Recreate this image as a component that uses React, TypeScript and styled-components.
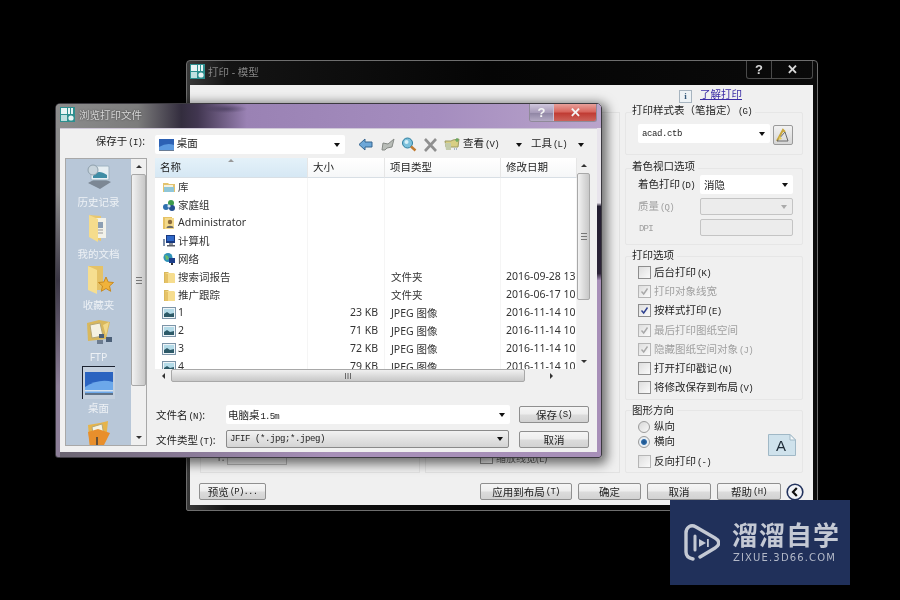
import React from "react";
import styled, { createGlobalStyle } from "styled-components";

const Global = createGlobalStyle`
  html, body { margin: 0; padding: 0; background: #000; }
  body { font-family: "Noto Sans", "Noto Sans CJK SC", sans-serif; font-size: 10.5px; color: #222; }
`;

const Desktop = styled.div`
  position: relative; width: 900px; height: 600px; overflow: hidden; background: #000; filter: blur(0.4px);
`;

/* ---------- back window ---------- */
const BackWindow = styled.div`
  position: absolute; left: 186px; top: 60px; width: 632px; height: 451px; box-sizing: border-box;
  border: 1px solid #6e6e6e; border-radius: 4px 4px 2px 2px;
  background: linear-gradient(90deg, #3a3a3a 0, #141414 40px, #050505 300px, #0a0a0a 100%);
  display: flex; flex-direction: column; padding: 0 4px 5px 3px;
`;
const TitleBar = styled.div`
  height: 24px; display: flex; align-items: flex-start; padding-top: 3px; box-sizing: border-box; flex: none;
`;
const BackTitleText = styled.span`color: #858585; font-size: 10.5px; margin-left: 3px;`;
const BackCaption = styled.div`
  margin-left: auto; margin-top: -3px; display: flex; height: 17px;
  border: 1px solid #4a4a4a; border-top: none; border-radius: 0 0 3px 3px; box-sizing: content-box;
`;
const CaptionBtn = styled.div<{ $w: number; $red?: boolean; $front?: boolean }>`
  width: ${p => p.$w}px; display: flex; align-items: center; justify-content: center;
  font: bold 13px "Liberation Sans", sans-serif;
  color: ${p => (p.$front ? "#f4f4f4" : "#d8d8d8")};
  border-left: 1px solid ${p => (p.$front ? "#c8c0d4" : "#4a4a4a")};
  background: ${p => p.$red ? "linear-gradient(180deg,#e8a09a 0,#d8665e 45%,#c03c34 55%,#cc625a 100%)" : p.$front ? "linear-gradient(180deg,#cfc6dc,#a79bb9 50%,#9187a5 55%,#b3a9c4)" : "transparent"};
  &:first-child { border-left: none; }
`;
const BackClient = styled.div`
  flex: 1; min-height: 0; background: #f0f0f0; display: flex; flex-direction: column;
`;
const BackMain = styled.div`flex: 1; display: flex; min-height: 0;`;
const LeftPane = styled.div`
  width: 435px; flex: none; box-sizing: border-box; padding: 27px 5px 0 10px; display: flex; gap: 5px;
`;
const LeftColumn = styled.div<{ $w: number }>`
  width: ${p => p.$w}px; flex: none; height: 361px; box-sizing: border-box; border: 1px solid #e2e2e2;
  display: flex; flex-direction: column; justify-content: flex-end; align-items: flex-start; padding: 0 0 7px 0;
`;
const GhostRow = styled.div<{ $left: number }>`
  display: flex; align-items: center; gap: 3px; margin-left: ${p => p.$left}px; color: #666; font-size: 10px; height: 16px;
`;
const GhostField = styled.div`width: 60px; height: 15px; box-sizing: border-box; border: 1px solid #bbb; background: #eee;`;
const RightPane = styled.div`width: 178px; flex: none; display: flex; flex-direction: column;`;
const LinkRow = styled.div`
  height: 27px; flex: none; box-sizing: border-box; padding: 2px 0 0 54px; display: flex; gap: 8px; align-items: flex-start;
`;
const InfoIcon = styled.div`
  width: 11px; height: 11px; margin-top: 3px; border: 1px solid #a7b4bf; background: #eef3f6; color: #355a7a;
  font: bold 9px "Liberation Serif", serif; text-align: center; line-height: 11px;
`;
const HelpLink = styled.a`color: #3b2ca6; text-decoration: underline; font-size: 10.5px; line-height: 14px;`;
const Group = styled.div<{ $h: number; $mt: number }>`
  height: ${p => p.$h}px; margin-top: ${p => p.$mt}px; flex: none; box-sizing: border-box;
  border: 1px solid #e6e6e6; border-radius: 2px; padding-left: 12px;
`;
const GroupTitle = styled.div<{ $up: number }>`
  height: 14px; line-height: 14px; margin: ${p => -8 - p.$up}px 0 ${p => p.$up}px -6px; width: fit-content; padding-right: 3px;
  background: #f0f0f0; color: #222; font-size: 10.5px; white-space: nowrap;
`;
const Key = styled.span`font-family: "Liberation Mono", monospace; font-size: 9px; letter-spacing: -0.8px; margin-left: 1px;`;
const StyleRow = styled.div`display: flex; margin-top: 7px; gap: 3px; align-items: flex-start;`;
const ComboBox = styled.div<{ $w: number; $h: number; $off?: boolean }>`
  width: ${p => p.$w}px; height: ${p => p.$h}px; box-sizing: border-box; flex: none;
  background: ${p => (p.$off ? "#ececec" : "#fff")};
  border: ${p => (p.$off ? "1px solid #c4c4c4" : "none")}; border-radius: 2px;
  display: flex; align-items: center; padding: 0 5px 0 4px;
`;
const ComboText = styled.span<{ $mono?: boolean }>`
  flex: 1; white-space: nowrap; overflow: hidden; font-size: 10.5px; color: #222;
  ${p => p.$mono && `font-family: "Liberation Mono", monospace; font-size: 9px; letter-spacing: -0.4px;`}
`;
const Arrow = styled.i<{ $off?: boolean }>`
  width: 0; height: 0; flex: none; border: 3.5px solid transparent; border-top: 4px solid ${p => (p.$off ? "#aaa" : "#111")}; border-bottom: none;
`;
const IconButton = styled.div`
  width: 20px; height: 20px; box-sizing: border-box; flex: none; margin-top: 1px; border: 1px solid #9a9a9a; border-radius: 2px;
  background: linear-gradient(180deg,#f2f2f2,#d6d6d6); display: flex; align-items: center; justify-content: center;
`;
const ShadeGrid = styled.div`
  display: grid; grid-template-columns: 62px 93px; grid-template-rows: 19px 17px 17px; row-gap: 4px; margin-top: 1px; align-items: center;
`;
const FieldLabel = styled.span<{ $off?: boolean }>`
  color: ${p => (p.$off ? "#a0a0a0" : "#222")}; font-size: 10.5px; white-space: nowrap; margin-bottom: 2px;
`;
const CheckList = styled.div`display: flex; flex-direction: column;`;
const CheckRow = styled.div<{ $h?: number }>`
  height: ${p => p.$h ?? 19.2}px; display: flex; align-items: center; gap: 3px; white-space: nowrap;
`;
const CheckBox = styled.div<{ $off?: boolean }>`
  width: 11px; height: 11px; flex: none; border: 1px solid ${p => (p.$off ? "#b5b5b5" : "#8d8d8d")};
  background: linear-gradient(135deg,#dedede,#fafafa); display: flex; align-items: center; justify-content: center;
`;
const RadioDot = styled.div<{ $on?: boolean }>`
  width: 10px; height: 10px; flex: none; margin-right: 1px; border-radius: 50%; border: 1px solid #9a9a9a;
  background: ${p => (p.$on ? "radial-gradient(circle,#1d4f86 0,#2c6aa8 35%,#e8eef4 48%)" : "linear-gradient(135deg,#d8d8d8,#f8f8f8)")};
`;
const OrientBody = styled.div`display: flex; margin-top: 2px;`;
const OrientLeft = styled.div`flex: 1;`;
const OrientIcon = styled.div`margin: 15px 6px 0 0;`;
const BackFooter = styled.div`
  flex: none; height: 17px; margin-top: 11px; padding: 0 10px 5px 9px; display: flex; align-items: center; gap: 6px;
`;
const PushBtn = styled.div<{ $w: number; $ml?: number }>`
  width: ${p => p.$w}px; height: 17px; flex: none; box-sizing: border-box; border: 1px solid #8f8f8f; border-radius: 2px;
  ${p => p.$ml && `margin-left: ${p.$ml}px;`}
  background: linear-gradient(180deg,#f5f5f5 0,#ededed 48%,#dcdcdc 52%,#d2d2d2 100%);
  display: flex; align-items: center; justify-content: center; font-size: 10.5px; color: #222; white-space: nowrap;
`;
const RoundBtn = styled.div`margin-left: -1px; width: 18px; height: 18px; flex: none;`;

/* ---------- front window ---------- */
const FrontWindow = styled.div`
  position: absolute; left: 55px; top: 103px; width: 547px; height: 355px; box-sizing: border-box;
  border: 1px solid #3c3a40; border-radius: 5px 5px 3px 3px; padding: 0 4px 5px 4px;
  background:
    linear-gradient(180deg,#e8e4ec 0,#e8e4ec 28%,#221d30 29%,#2c2438 48%,#a78fb8 50%,#a78fb8 100%) right top / 4px 100% no-repeat,
    linear-gradient(180deg,#8a8a8a 0,#8a8a8a 25%,#3a3644 50%,#8d7f98 80%,#8d7f98 100%) left top / 4px 100% no-repeat,
    linear-gradient(90deg,#6a6470 0,#8a7a98 25%,#a78fb8 50%,#a78fb8 100%);
  box-shadow: 2px 3px 11px 3px rgba(0,0,0,.55);
  display: flex; flex-direction: column;
`;
const FrontTitle = styled.div`
  height: 24px; flex: none; box-sizing: border-box; display: flex; align-items: flex-start; padding: 3px 4px 0;
  background:
    radial-gradient(ellipse 22px 4px at 170px 5px, rgba(50,42,70,.5), rgba(50,42,70,0)),
    linear-gradient(90deg,#8c8c8c 0,#7c7c7c 15%,#332d3e 23%,#413650 26%,#9a82b4 35%,#a58dbf 70%,#b9a4cb 100%);
  margin: 0 -4px; border-radius: 4px 4px 0 0;
`;
const FrontTitleText = styled.span`color: #d8d8d8; font-size: 10.5px; margin-left: 4px; text-shadow: 0 0 2px #333;`;
const FrontCaption = styled.div`
  margin-left: auto; margin-top: -3px; display: flex; height: 17px;
  border: 1px solid #8f8a99; border-top: none; border-radius: 0 0 3px 3px; overflow: hidden;
`;
const FrontClient = styled.div`
  flex: 1; min-height: 0; background: #f0f0f0; display: flex; flex-direction: column; padding-top: 6px; box-sizing: border-box;
  border-top: 1px solid #cfc8d8;
`;
const TopRow = styled.div`display: flex; align-items: center; height: 19px; flex: none;`;
const SaveLabel = styled.span`width: 85px; text-align: right; font-size: 10.5px; flex: none; margin-bottom: 8px;`;
const TopCombo = styled(ComboBox)`
  margin-left: 10px;
  ${ComboText} { margin-bottom: 4px; }
`;
const Toolbar = styled.div`display: flex; align-items: center; margin-left: 9px; height: 19px;`;
const ToolIcon = styled.div<{ $w: number }>`width: ${p => p.$w}px; flex: none; display: flex; justify-content: center;`;
const ToolText = styled.span<{ $w: number; $pad?: number }>`
  width: ${p => p.$w}px; flex: none; white-space: nowrap; font-size: 10.5px; margin-bottom: 5px; box-sizing: border-box;
  padding-left: ${p => p.$pad ?? 0}px;
`;
const Body = styled.div`display: flex; margin-top: 4px; padding-left: 5px; gap: 8px;`;
const Sidebar = styled.div`
  width: 82px; height: 288px; flex: none; box-sizing: border-box; border: 1px solid #a8a8a8; display: flex; background: #f2f2f2; overflow: hidden;
`;
const Places = styled.div`
  width: 65px; background: #b8c7d8; display: flex; flex-direction: column; align-items: center; overflow: hidden; padding-top: 1px; box-sizing: border-box;
`;
const Place = styled.div`
  height: 51.5px; flex: none; width: 100%; display: flex; flex-direction: column; align-items: center;
`;
const PlaceIcon = styled.div<{ $on?: boolean }>`
  width: 33px; height: 33px; flex: none; display: flex; align-items: center; justify-content: center; box-sizing: border-box;
  ${p => p.$on && `border-left: 1px solid #1b2230; border-top: 1px solid #1b2230; background: #c4d0de;`}
`;
const PlaceLabel = styled.span`color: #edf1f5; font-size: 10.5px; line-height: 14px; margin-top: 2px; white-space: nowrap;`;
const VScroll = styled.div<{ $w: number }>`
  width: ${p => p.$w}px; flex: none; display: flex; flex-direction: column; align-items: center; box-sizing: border-box; background: #f0f0f0;
`;
const ScrollEnd = styled.div`height: 15px; flex: none; display: flex; align-items: center; justify-content: center;`;
const UpTri = styled.i`width: 0; height: 0; border: 3px solid transparent; border-bottom: 3px solid #333; border-top: none;`;
const DownTri = styled.i`width: 0; height: 0; border: 3px solid transparent; border-top: 3px solid #333; border-bottom: none;`;
const LeftTri = styled.i`width: 0; height: 0; border: 3px solid transparent; border-right: 3px solid #333; border-left: none;`;
const RightTri = styled.i`width: 0; height: 0; border: 3px solid transparent; border-left: 3px solid #333; border-right: none;`;
const VThumb = styled.div<{ $h: number }>`
  width: 100%; height: ${p => p.$h}px; flex: none; box-sizing: border-box; border: 1px solid #a8a8a8; border-radius: 2px;
  background: linear-gradient(90deg,#f2f2f2,#dcdcdc 50%,#c8c8c8); display: flex; align-items: center; justify-content: center;
`;
const VGrip = styled.div`width: 6px; height: 5px; border-top: 1px solid #777; border-bottom: 1px solid #777; background: linear-gradient(180deg,transparent 40%,#777 40%,#777 60%,transparent 60%);`;
const Spring = styled.div`flex: 1;`;
const FileColumn = styled.div`width: 435px; flex: none; display: flex; flex-direction: column;`;
const FileArea = styled.div`display: flex; height: 211px; flex: none;`;
const FileList = styled.div`width: 422px; flex: none; background: #fff; overflow: hidden; display: flex; flex-direction: column;`;
const Cols = styled.div`display: grid; grid-template-columns: 153px 77px 116px 76px; flex: none;`;
const HeadCell = styled.div<{ $sorted?: boolean }>`
  height: 20px; box-sizing: border-box; padding: 0 0 2px 5px; display: flex; align-items: center; position: relative; font-size: 10.5px;
  border-right: 1px solid #e6e6e6; border-bottom: 1px solid #d8dfe5;
  background: ${p => (p.$sorted ? "linear-gradient(180deg,#e4f1f9,#d6e8f4)" : "linear-gradient(180deg,#fff,#f6f7f8)")};
`;
const SortMark = styled.i`
  position: absolute; left: 73px; top: 1px; width: 0; height: 0; border: 3px solid transparent; border-bottom: 3px solid #999; border-top: none;
`;
const Cell = styled.div<{ $right?: boolean; $pad?: number }>`
  height: 18px; box-sizing: border-box; display: flex; align-items: center; overflow: hidden; white-space: nowrap; font-size: 10.5px; color: #333;
  padding-left: ${p => p.$pad ?? 0}px; padding-right: ${p => (p.$right ? 6 : 0)}px; padding-bottom: 2px;
  justify-content: ${p => (p.$right ? "flex-end" : "flex-start")};
  border-right: 1px solid #f5f5f5;
`;
const FileIcon = styled.div`width: 14px; height: 14px; flex: none; margin-right: 2px; margin-top: 2px;`;
const HScroll = styled.div`height: 13px; flex: none; width: 422px; display: flex; align-items: stretch;`;
const HEnd = styled.div<{ $w: number }>`width: ${p => p.$w}px; flex: none; display: flex; align-items: center; justify-content: center;`;
const HThumb = styled.div`
  width: 354px; flex: none; box-sizing: border-box; border: 1px solid #a8a8a8; border-radius: 2px;
  background: linear-gradient(180deg,#f0f0f0,#dcdcdc 50%,#c8c8c8); display: flex; align-items: center; justify-content: center;
  color: #555; font: 9px "Liberation Sans", sans-serif;
`;
const FormRow = styled.div<{ $mt: number; $h: number }>`
  display: flex; align-items: center; height: ${p => p.$h}px; margin-top: ${p => p.$mt}px; flex: none;
`;
const FormLabel = styled.span`width: 71px; flex: none; font-size: 10.5px; white-space: nowrap; padding-left: 1px; box-sizing: border-box;`;
const TypeSelect = styled.div`
  width: 283px; height: 18px; flex: none; box-sizing: border-box; border: 1px solid #8a8a8a; border-radius: 2px; margin-right: 10px;
  background: linear-gradient(180deg,#f2f2f2,#e2e2e2 50%,#d4d4d4); display: flex; align-items: center; padding: 0 5px 0 3px;
`;
const NameBox = styled(ComboBox)`margin-right: 9px; padding-left: 2px;`;

/* ---------- watermark ---------- */
const Watermark = styled.div`
  position: absolute; left: 670px; top: 500px; width: 180px; height: 85px; background: #20305a;
  display: flex; align-items: center; padding-left: 14px; box-sizing: border-box; gap: 12px;
`;
const MarkText = styled.div`display: flex; flex-direction: column; align-items: flex-start;`;
const MarkTitle = styled.div`
  color: #c4c9d4; font: 700 26px/26px "Noto Sans CJK SC", sans-serif; letter-spacing: 1px; white-space: nowrap;
`;
const MarkSub = styled.div`
  color: #b3b9c8; font: 10px/12px "DejaVu Sans", sans-serif; letter-spacing: 1.15px; margin-top: 5px; white-space: nowrap; margin-left: 1px;
`;

/* ---------- drawings ---------- */
const AppLogo = () => (
  <svg width="15" height="15" viewBox="0 0 15 15">
    <rect width="15" height="15" fill="#2d8f8f" />
    <rect x="1" y="1" width="6" height="6" fill="#e8f4f4" />
    <rect x="8" y="1" width="2" height="6" fill="#e8f4f4" />
    <rect x="11" y="1" width="2" height="6" fill="#e8f4f4" />
    <rect x="1" y="8" width="6" height="6" fill="#bfe0e0" />
    <circle cx="11" cy="11" r="2.6" fill="#e8f4f4" />
  </svg>
);
const Folder = ({ s = 14 }: { s?: number }) => (
  <svg width={s} height={s} viewBox="0 0 14 14">
    <path d="M2 2h4l1 1h1v10H2z" fill="#d9b95c" />
    <path d="M3 3h9l1 1v9H3z" fill="#f6dd8f" />
    <path d="M3 3l3 1v9H3z" fill="#e6c266" />
  </svg>
);
const Library = () => (
  <svg width="14" height="14" viewBox="0 0 14 14">
    <path d="M1 3h5l1 1h6v8H1z" fill="#e3c36e" />
    <path d="M2 7h10v5H2z" fill="#8fc6d8" />
    <path d="M2 5h9v2H2z" fill="#f4f0de" />
  </svg>
);
const HomeGroup = () => (
  <svg width="14" height="14" viewBox="0 0 14 14">
    <circle cx="4" cy="9" r="3" fill="#2f6fae" />
    <circle cx="9" cy="5" r="3" fill="#3d9a4d" />
    <circle cx="10" cy="10" r="3" fill="#254f90" />
    <circle cx="7" cy="8" r="1.6" fill="#d6e6f4" />
  </svg>
);
const Admin = () => (
  <svg width="14" height="14" viewBox="0 0 14 14">
    <path d="M1 1h9v12H1z" fill="#e6c266" />
    <path d="M3 2h9v11H3z" fill="#f3d98a" />
    <circle cx="8" cy="6" r="2.2" fill="#8a6a3c" />
    <path d="M4.5 12c0-3 7-3 7 0z" fill="#6a6a6a" />
  </svg>
);
const Computer = () => (
  <svg width="14" height="14" viewBox="0 0 14 14">
    <rect x="4" y="1" width="9" height="8" fill="#18387e" />
    <rect x="5" y="2" width="7" height="5" fill="#2f68c8" />
    <rect x="7" y="9" width="4" height="2" fill="#8d9199" />
    <rect x="5" y="11" width="8" height="1.5" fill="#5a5e68" />
    <rect x="1" y="5" width="2" height="7" fill="#7d8fa8" />
  </svg>
);
const Network = () => (
  <svg width="14" height="14" viewBox="0 0 14 14">
    <circle cx="6" cy="5.5" r="4.5" fill="#2f92b8" />
    <path d="M3 3l3 1 1 3-3 1z" fill="#6cbc6a" />
    <rect x="7" y="6" width="6" height="5" fill="#1d3f8a" />
    <rect x="9" y="11" width="2" height="2" fill="#333" />
  </svg>
);
const Thumb = () => (
  <svg width="14" height="14" viewBox="0 0 14 14">
    <rect x="0.5" y="1.5" width="13" height="11" fill="#eef4f8" stroke="#7d95a8" />
    <rect x="2" y="3" width="10" height="8" fill="#b4dbe8" />
    <path d="M2 8l3-2 3 2 4-1v4H2z" fill="#2d5a68" />
  </svg>
);
const DesktopSmall = () => (
  <svg width="15" height="12" viewBox="0 0 15 12">
    <rect width="15" height="11" fill="#2c61b4" />
    <path d="M0 8 Q8 3 15 6V11H0z" fill="#5c9ae0" />
    <rect y="11" width="15" height="1" fill="#6a7c94" />
  </svg>
);
const BackArrow = () => (
  <svg width="15" height="13" viewBox="0 0 15 13">
    <path d="M7 1 1 6.5 7 12V9h7V4H7z" fill="#6da7d8" stroke="#35648f" />
  </svg>
);
const WebUp = () => (
  <svg width="15" height="14" viewBox="0 0 15 14">
    <path d="M2 12 3 5l5 1 6-5-2 8-5 1-2 2z" fill="#b9bdb8" stroke="#868a86" />
  </svg>
);
const Search = () => (
  <svg width="16" height="15" viewBox="0 0 16 15">
    <circle cx="6.5" cy="6" r="5" fill="#7dc1dc" stroke="#2f7fa0" />
    <circle cx="5.5" cy="5" r="2" fill="#d8f0f8" />
    <path d="M10 9.5l4.5 4" stroke="#c17a30" strokeWidth="2.4" />
  </svg>
);
const Cross = () => (
  <svg width="15" height="14" viewBox="0 0 15 14">
    <path d="M2 1l11 12M13 1 2 13" stroke="#8f8f8f" strokeWidth="2.6" />
  </svg>
);
const NewFolder = () => (
  <svg width="16" height="15" viewBox="0 0 16 15">
    <path d="M1 4h6l2-1 6-1-1 8H2z" fill="#d8cf84" stroke="#9c9a62" />
    <path d="M1 6h6v7H2z" fill="#c3cbaa" />
    <path d="M13 1v4M11 3h4" stroke="#5aa35a" strokeWidth="1.2" />
    <path d="M10 12h4" stroke="#5a7a9a" strokeDasharray="1 1" />
  </svg>
);
const Pencil = () => (
  <svg width="16" height="16" viewBox="0 0 16 16">
    <path d="M2 14 L8 3l2 2" fill="none" stroke="#c9a63a" strokeWidth="2" />
    <path d="M2 14h11l-3-9z" fill="none" stroke="#6a6a6a" />
    <path d="M3 13l4-1-2-3z" fill="#e8cf62" />
  </svg>
);
const History = () => (
  <svg width="30" height="28" viewBox="0 0 30 28">
    <path d="M4 20 16 26 27 19 15 14z" fill="#7c8794" />
    <rect x="7" y="3" width="18" height="14" rx="1" fill="#e7eff3" stroke="#9fb3c2" />
    <path d="M9 13c3-5 8-5 14-1v3H9z" fill="#3f8da5" />
    <circle cx="9" cy="7" r="5" fill="#c8d4dc" stroke="#8fa0ac" />
  </svg>
);
const Docs = () => (
  <svg width="26" height="30" viewBox="0 0 26 30">
    <path d="M3 2l12 1v25L3 24z" fill="#e9c76e" />
    <path d="M6 5h14v20H6z" fill="#f2f2ea" />
    <path d="M9 9h8v6H9z" fill="#8c9fb3" />
    <path d="M9 17h8M9 20h8" stroke="#999" />
    <path d="M3 2l9 4v23L3 24z" fill="#f5dc8c" />
  </svg>
);
const Favs = () => (
  <svg width="30" height="30" viewBox="0 0 30 30">
    <path d="M4 1h15v24H4z" fill="#e5c267" />
    <path d="M4 1l9 4v24l-9-4z" fill="#f6de90" />
    <path d="M22 12l2.2 5 5.3.5-4 3.5 1.2 5.3-4.7-2.8-4.7 2.8 1.2-5.3-4-3.5 5.3-.5z" fill="#f0b23a" stroke="#c98b20" />
  </svg>
);
const Ftp = () => (
  <svg width="30" height="28" viewBox="0 0 30 28">
    <path d="M3 6l12-3 11 2-4 17L4 24z" fill="#d9b85c" />
    <path d="M6 8l10-2 3 13L8 21z" fill="#f5f2e2" stroke="#b5a878" />
    <path d="M19 8l6-3-3 14z" fill="#f1d88a" />
    <rect x="15" y="17" width="5" height="4" fill="#4c6078" />
    <rect x="22" y="20" width="6" height="5" fill="#4c6078" />
    <rect x="13" y="23" width="6" height="4" fill="#6c7c90" />
  </svg>
);
const DesktopBig = () => (
  <svg width="28" height="23" viewBox="0 0 28 23">
    <rect width="28" height="21" fill="#2a63c0" />
    <path d="M0 15Q14 6 28 10V21H0z" fill="#6ca8ea" />
    <rect y="18" width="28" height="1.5" fill="#d6e2ee" />
    <rect y="21" width="28" height="2" fill="#5f7288" />
  </svg>
);
const OpenFolder = () => (
  <svg width="30" height="30" viewBox="0 0 30 30">
    <path d="M4 6l12-2 8-2-2 20-16 6z" fill="#e6b44a" />
    <path d="M8 8l10-3 2 12-10 4z" fill="#f5f2e2" stroke="#b5a878" />
    <path d="M4 13l10-3 12 4-6 12-14 2z" fill="#e88f2c" />
    <path d="M13 18v9" stroke="#3b3b3b" strokeWidth="1.5" />
  </svg>
);
const PageA = () => (
  <svg width="28" height="22" viewBox="0 0 28 22">
    <path d="M0.5 0.5H22L27.5 6V21.5H0.5z" fill="#cfe2ec" stroke="#a0b8c6" />
    <path d="M22 0.5V6H27.5z" fill="#f4f8fa" stroke="#a0b8c6" />
    <text x="8" y="17" fontFamily="Liberation Sans, sans-serif" fontSize="15" fill="#1d2a36">A</text>
  </svg>
);
const Collapse = () => (
  <svg width="18" height="18" viewBox="0 0 18 18">
    <circle cx="9" cy="9" r="7.8" fill="#f2f4f8" stroke="#23335e" strokeWidth="1.6" />
    <path d="M10.8 5 7 9l3.8 4" fill="none" stroke="#111" strokeWidth="2.2" />
  </svg>
);
const Tick = ({ c }: { c: string }) => (
  <svg width="9" height="9" viewBox="0 0 9 9">
    <path d="M1.5 4.5 3.7 7 7.5 1.5" fill="none" stroke={c} strokeWidth="1.4" />
  </svg>
);
const LogoMark = () => (
  <svg width="36" height="38" viewBox="0 0 36 38">
    <path d="M9 35C4 34 2 32 2 28V9C2 3 7 0 12 3L31 14c5 3 5 7 0 10L16 33" fill="none" stroke="#c4c9d4" strokeWidth="3.4" strokeLinecap="round" />
    <path d="M11 12v14" stroke="#c4c9d4" strokeWidth="3" strokeLinecap="round" />
    <path d="M15 15l7 4-7 4z" fill="#c4c9d4" />
    <rect x="23" y="15" width="1.8" height="8" fill="#c4c9d4" />
  </svg>
);

/* ---------- data ---------- */
const files: { icon: React.ReactNode; name: string; size?: string; type?: string; date?: string }[] = [
  { icon: <Library />, name: "库" },
  { icon: <HomeGroup />, name: "家庭组" },
  { icon: <Admin />, name: "Administrator" },
  { icon: <Computer />, name: "计算机" },
  { icon: <Network />, name: "网络" },
  { icon: <Folder />, name: "搜索词报告", type: "文件夹", date: "2016-09-28 13" },
  { icon: <Folder />, name: "推广跟踪", type: "文件夹", date: "2016-06-17 10" },
  { icon: <Thumb />, name: "1", size: "23 KB", type: "JPEG 图像", date: "2016-11-14 10" },
  { icon: <Thumb />, name: "2", size: "71 KB", type: "JPEG 图像", date: "2016-11-14 10" },
  { icon: <Thumb />, name: "3", size: "72 KB", type: "JPEG 图像", date: "2016-11-14 10" },
  { icon: <Thumb />, name: "4", size: "79 KB", type: "JPEG 图像", date: "2016-11-14 10" },
];
const places: { icon: React.ReactNode; label: string; on?: boolean }[] = [
  { icon: <History />, label: "历史记录" },
  { icon: <Docs />, label: "我的文档" },
  { icon: <Favs />, label: "收藏夹" },
  { icon: <Ftp />, label: "FTP" },
  { icon: <DesktopBig />, label: "桌面", on: true },
  { icon: <OpenFolder />, label: "" },
];
const options: { label: string; k: string; off?: boolean; on?: boolean }[] = [
  { label: "后台打印", k: "(K)" },
  { label: "打印对象线宽", k: "", off: true, on: true },
  { label: "按样式打印", k: "(E)", on: true },
  { label: "最后打印图纸空间", k: "", off: true, on: true },
  { label: "隐藏图纸空间对象", k: "(J)", off: true, on: true },
  { label: "打开打印戳记", k: "(N)" },
  { label: "将修改保存到布局", k: "(V)" },
];

export default function App() {
  return (
    <Desktop>
      <Global />
      <BackWindow>
        <TitleBar>
          <AppLogo />
          <BackTitleText>打印 - 模型</BackTitleText>
          <BackCaption>
            <CaptionBtn $w={24}>?</CaptionBtn>
            <CaptionBtn $w={40}>✕</CaptionBtn>
          </BackCaption>
        </TitleBar>
        <BackClient>
          <BackMain>
            <LeftPane>
              <LeftColumn $w={220}>
                <GhostRow $left={15}>
                  <span>1:</span>
                  <GhostField />
                </GhostRow>
              </LeftColumn>
              <LeftColumn $w={195}>
                <GhostRow $left={54}>
                  <CheckBox />
                  <span>缩放线宽(L)</span>
                </GhostRow>
              </LeftColumn>
            </LeftPane>
            <RightPane>
              <LinkRow>
                <InfoIcon>i</InfoIcon>
                <HelpLink>了解打印</HelpLink>
              </LinkRow>
              <Group $h={43} $mt={0}>
                <GroupTitle $up={2}>打印样式表（笔指定）<Key>(G)</Key></GroupTitle>
                <StyleRow>
                  <ComboBox $w={132} $h={19}>
                    <ComboText $mono>acad.ctb</ComboText>
                    <Arrow />
                  </ComboBox>
                  <IconButton><Pencil /></IconButton>
                </StyleRow>
              </Group>
              <Group $h={77} $mt={13}>
                <GroupTitle $up={2}>着色视口选项</GroupTitle>
                <ShadeGrid>
                  <FieldLabel>着色打印<Key>(D)</Key></FieldLabel>
                  <ComboBox $w={93} $h={19}>
                    <ComboText>消隐</ComboText>
                    <Arrow />
                  </ComboBox>
                  <FieldLabel $off>质量<Key>(Q)</Key></FieldLabel>
                  <ComboBox $w={93} $h={17} $off>
                    <ComboText />
                    <Arrow $off />
                  </ComboBox>
                  <FieldLabel $off><Key>DPI</Key></FieldLabel>
                  <ComboBox $w={93} $h={17} $off />
                </ShadeGrid>
              </Group>
              <Group $h={144} $mt={11}>
                <GroupTitle $up={1}>打印选项</GroupTitle>
                <CheckList>
                  {options.map(o => (
                    <CheckRow key={o.label}>
                      <CheckBox $off={o.off}>{o.on && <Tick c={o.off ? "#a8a8a8" : "#2c3f8f"} />}</CheckBox>
                      <FieldLabel $off={o.off}>{o.label}<Key>{o.k}</Key></FieldLabel>
                    </CheckRow>
                  ))}
                </CheckList>
              </Group>
              <Group $h={63} $mt={10}>
                <GroupTitle $up={0}>图形方向</GroupTitle>
                <OrientBody>
                  <OrientLeft>
                    <CheckRow $h={15}><RadioDot /><FieldLabel>纵向</FieldLabel></CheckRow>
                    <CheckRow $h={15}><RadioDot $on /><FieldLabel>横向</FieldLabel></CheckRow>
                    <CheckRow $h={24}><CheckBox $off /><FieldLabel>反向打印<Key>(-)</Key></FieldLabel></CheckRow>
                  </OrientLeft>
                  <OrientIcon><PageA /></OrientIcon>
                </OrientBody>
              </Group>
            </RightPane>
          </BackMain>
          <BackFooter>
            <PushBtn $w={67}>预览<Key>(P)...</Key></PushBtn>
            <PushBtn $w={92} $ml={208}>应用到布局<Key>(T)</Key></PushBtn>
            <PushBtn $w={63}>确定</PushBtn>
            <PushBtn $w={64}>取消</PushBtn>
            <PushBtn $w={64}>帮助<Key>(H)</Key></PushBtn>
            <RoundBtn><Collapse /></RoundBtn>
          </BackFooter>
        </BackClient>
      </BackWindow>

      <FrontWindow>
        <FrontTitle>
          <AppLogo />
          <FrontTitleText>浏览打印文件</FrontTitleText>
          <FrontCaption>
            <CaptionBtn $w={23} $front>?</CaptionBtn>
            <CaptionBtn $w={42} $red $front>✕</CaptionBtn>
          </FrontCaption>
        </FrontTitle>
        <FrontClient>
          <TopRow>
            <SaveLabel>保存于<Key>(I)</Key>:</SaveLabel>
            <TopCombo $w={190} $h={19}>
              <DesktopSmall />
              <ComboText>&nbsp;桌面</ComboText>
              <Arrow />
            </TopCombo>
            <Toolbar>
              <ToolIcon $w={22}><BackArrow /></ToolIcon>
              <ToolIcon $w={22}><WebUp /></ToolIcon>
              <ToolIcon $w={21}><Search /></ToolIcon>
              <ToolIcon $w={22}><Cross /></ToolIcon>
              <ToolIcon $w={22}><NewFolder /></ToolIcon>
              <ToolText $w={50}>查看<Key>(V)</Key></ToolText>
              <ToolIcon $w={12}><Arrow /></ToolIcon>
              <ToolText $w={48} $pad={6}>工具<Key>(L)</Key></ToolText>
              <ToolIcon $w={16}><Arrow /></ToolIcon>
            </Toolbar>
          </TopRow>
          <Body>
            <Sidebar>
              <Places>
                {places.map(p => (
                  <Place key={p.label || "more"}>
                    <PlaceIcon $on={p.on}>{p.icon}</PlaceIcon>
                    {p.label && <PlaceLabel>{p.label}</PlaceLabel>}
                  </Place>
                ))}
              </Places>
              <VScroll $w={15}>
                <ScrollEnd><UpTri /></ScrollEnd>
                <VThumb $h={212}><VGrip /></VThumb>
                <Spring />
                <ScrollEnd><DownTri /></ScrollEnd>
              </VScroll>
            </Sidebar>
            <FileColumn>
              <FileArea>
                <FileList>
                  <Cols>
                    <HeadCell $sorted>名称<SortMark /></HeadCell>
                    <HeadCell>大小</HeadCell>
                    <HeadCell>项目类型</HeadCell>
                    <HeadCell>修改日期</HeadCell>
                  </Cols>
                  {files.map(f => (
                    <Cols key={f.name}>
                      <Cell $pad={7}><FileIcon>{f.icon}</FileIcon>{f.name}</Cell>
                      <Cell $right>{f.size}</Cell>
                      <Cell $pad={6}>{f.type}</Cell>
                      <Cell $pad={5}>{f.date}</Cell>
                    </Cols>
                  ))}
                </FileList>
                <VScroll $w={13}>
                  <ScrollEnd><UpTri /></ScrollEnd>
                  <VThumb $h={127}><VGrip /></VThumb>
                  <Spring />
                  <ScrollEnd><DownTri /></ScrollEnd>
                </VScroll>
              </FileArea>
              <HScroll>
                <HEnd $w={16}><LeftTri /></HEnd>
                <HThumb>III</HThumb>
                <HEnd $w={52}><RightTri /></HEnd>
              </HScroll>
              <FormRow $mt={23} $h={19}>
                <FormLabel>文件名<Key>(N)</Key>:</FormLabel>
                <NameBox $w={284} $h={19}>
                  <ComboText>电脑桌<Key>1.5m</Key></ComboText>
                  <Arrow />
                </NameBox>
                <PushBtn $w={70}>保存<Key>(S)</Key></PushBtn>
              </FormRow>
              <FormRow $mt={6} $h={18}>
                <FormLabel>文件类型<Key>(T)</Key>:</FormLabel>
                <TypeSelect>
                  <ComboText $mono>JFIF (*.jpg;*.jpeg)</ComboText>
                  <Arrow />
                </TypeSelect>
                <PushBtn $w={70}>取消</PushBtn>
              </FormRow>
            </FileColumn>
          </Body>
        </FrontClient>
      </FrontWindow>

      <Watermark>
        <LogoMark />
        <MarkText>
          <MarkTitle>溜溜自学</MarkTitle>
          <MarkSub>ZIXUE.3D66.COM</MarkSub>
        </MarkText>
      </Watermark>
    </Desktop>
  );
}
